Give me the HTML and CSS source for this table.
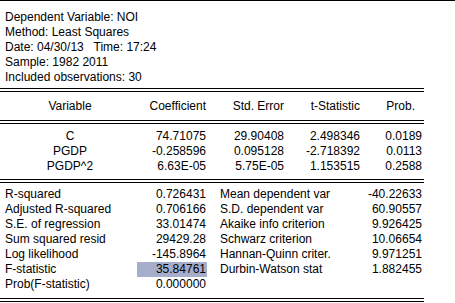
FILE: index.html
```html
<!DOCTYPE html>
<html>
<head>
<meta charset="utf-8">
<link rel="stylesheet" href="styles.css">
</head>
<body>
<div class="page">
  <div class="info">
    <div>Dependent Variable: NOI</div>
    <div>Method: Least Squares</div>
    <div>Date: 04/30/13&nbsp;&nbsp; Time: 17:24</div>
    <div>Sample: 1982 2011</div>
    <div>Included observations: 30</div>
  </div>
  <div class="dbl"></div>
  <div class="coef head">
    <div class="c1">Variable</div>
    <div>Coefficient</div>
    <div>Std. Error</div>
    <div>t-Statistic</div>
    <div class="p">Prob.</div>
  </div>
  <div class="dbl"></div>
  <div class="coefs">
    <div class="coef">
      <div class="c1">C</div><div>74.71075</div><div>29.90408</div><div>2.498346</div><div>0.0189</div>
    </div>
    <div class="coef">
      <div class="c1">PGDP</div><div>-0.258596</div><div>0.095128</div><div>-2.718392</div><div>0.0113</div>
    </div>
    <div class="coef">
      <div class="c1">PGDP^2</div><div>6.63E-05</div><div>5.75E-05</div><div>1.153515</div><div>0.2588</div>
    </div>
  </div>
  <div class="dbl"></div>
  <div class="stats">
    <div class="l">R-squared</div><div class="v">0.726431</div><div class="l2">Mean dependent var</div><div class="v2">-40.22633</div>
    <div class="l">Adjusted R-squared</div><div class="v">0.706166</div><div class="l2">S.D. dependent var</div><div class="v2">60.90557</div>
    <div class="l">S.E. of regression</div><div class="v">33.01474</div><div class="l2">Akaike info criterion</div><div class="v2">9.926425</div>
    <div class="l">Sum squared resid</div><div class="v">29429.28</div><div class="l2">Schwarz criterion</div><div class="v2">10.06654</div>
    <div class="l">Log likelihood</div><div class="v">-145.8964</div><div class="l2">Hannan-Quinn criter.</div><div class="v2">9.971251</div>
    <div class="l">F-statistic</div><div class="v sel">35.84761</div><div class="l2">Durbin-Watson stat</div><div class="v2">1.882455</div>
    <div class="l">Prob(F-statistic)</div><div class="v">0.000000</div><div class="l2"></div><div class="v2"></div>
  </div>
  <div class="dbl"></div>
</div>
</body>
</html>
```
FILE: styles.css
```css
html, body {
  margin: 0;
  padding: 0;
  background: #fff;
}
.page {
  width: 455px;
  height: 303px;
  overflow: hidden;
  border-top: 1px solid #000;
  box-sizing: border-box;
  font-family: "Liberation Sans", Arial, sans-serif;
  font-size: 12px;
  line-height: 15px;
  color: #000;
}
.info {
  padding: 9px 5px 3px;
}
.dbl {
  width: 424px;
  height: 2px;
  border-top: 1px solid #000;
  border-bottom: 1px solid #000;
}
.coef {
  display: grid;
  grid-template-columns: 140px 66px 78px 76px 62px;
  text-align: right;
}
.coef .c1 {
  text-align: center;
}
.head {
  height: 28px;
  align-items: center;
}
.head .p {
  padding-right: 7px;
}
.coefs {
  padding: 5px 0 5px;
}
.stats {
  display: grid;
  grid-template-columns: 137px 70px 153px 63px;
  padding: 4px 0 6px;
}
.stats .l {
  padding-left: 5px;
}
.stats .v, .stats .v2 {
  text-align: right;
  padding-right: 1px;
}
.stats .l2 {
  padding-left: 13px;
}
.sel {
  background: #a6aecb;
}
```
